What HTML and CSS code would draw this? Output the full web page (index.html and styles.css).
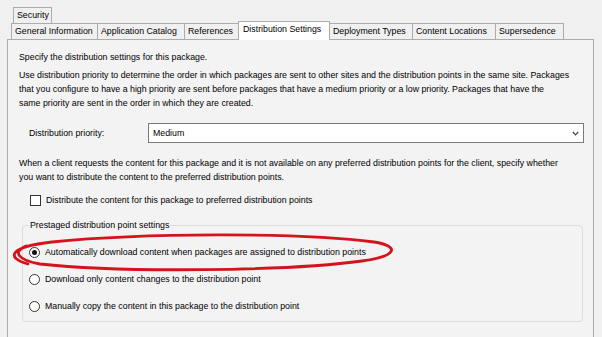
FILE: index.html
```html
<!DOCTYPE html>
<html lang="en">
<head>
  <meta charset="UTF-8">
  <title>Distribution Settings</title>
  <link rel="stylesheet" href="styles.css">
</head>
<body>

  <div class="window">
    <div class="tabs">
      <div class="tab-row top-row">
        <span class="tab tab-security">Security</span>
      </div>
      <div class="tab-row">
        <span class="tab tab-general">General Information</span>
        <span class="tab tab-catalog">Application Catalog</span>
        <span class="tab tab-references">References</span>
        <span class="tab tab-distribution active">Distribution Settings</span>
        <span class="tab tab-deployment">Deployment Types</span>
        <span class="tab tab-content">Content Locations</span>
        <span class="tab tab-supersedence">Supersedence</span>
      </div>
    </div>

    <div class="panel">
      <p class="intro">Specify the distribution settings for this package.</p>
      <p class="desc">Use distribution priority to determine the order in which packages are sent to other sites and the distribution points in the same site. Packages<br>that you configure to have a high priority are sent before packages that have a medium priority or a low priority. Packages that have the<br>same priority are sent in the order in which they are created.</p>

      <div class="priority-row">
        <span class="priority-label">Distribution priority:</span>
        <div class="select">
          <span>Medium</span>
          <svg class="chevron" width="7" height="5" viewBox="0 0 7 5">
            <path d="M0.8 1 L3.5 3.8 L6.2 1" fill="none" stroke="#444" stroke-width="1.2"/>
          </svg>
        </div>
      </div>

      <p class="desc client">When a client requests the content for this package and it is not available on any preferred distribution points for the client, specify whether<br>you want to distribute the content to the preferred distribution points.</p>

      <div class="check-row">
        <span class="checkbox"></span>
        <span>Distribute the content for this package to preferred distribution points</span>
      </div>

      <fieldset class="prestaged">
        <legend>Prestaged distribution point settings</legend>
        <div class="radio-row">
          <span class="radio checked"></span>
          <span>Automatically download content when packages are assigned to distribution points</span>
        </div>
        <div class="radio-row">
          <span class="radio"></span>
          <span>Download only content changes to the distribution point</span>
        </div>
        <div class="radio-row">
          <span class="radio"></span>
          <span>Manually copy the content in this package to the distribution point</span>
        </div>
      </fieldset>
    </div>

    <!-- red marker drawn over the first option -->
    <svg class="marker" width="602" height="337" viewBox="0 0 602 337">
      <path d="M28 264 C6 258 8 247 52 242 C140 233 300 232 374 242 C400 246 398 256 362 261 C290 271 120 273 40 264 C18 260 12 252 26 246"
            fill="none" stroke="#d3141d" stroke-width="2.8" stroke-linecap="round"/>
    </svg>
  </div>

</body>
</html>
```

FILE: styles.css
```css
* {
  margin: 0;
  padding: 0;
  box-sizing: border-box;
}

body {
  font-family: 'Liberation Sans', Arial, sans-serif;
  font-size: 8.8px;
  color: #000;
  background: #f0f0f0;
  width: 602px;
  height: 337px;
  overflow: hidden;
}

.window {
  position: relative;
  height: 337px;
}

.tabs {
  padding-top: 7px;
}

.tab-row {
  display: flex;
  align-items: flex-end;
  padding-left: 11px;
  height: 16px;
}

.tab-row.top-row {
  padding-left: 13px;
}

.tab {
  height: 16px;
  line-height: 15px;
  padding: 0 0 0 3px;
  border: 1px solid #acacac;
  border-bottom: none;
  background: #f0f0f0;
  white-space: nowrap;
  overflow: hidden;
}

.tab + .tab {
  margin-left: -1px;
}

.tab-security { width: 39px; }
.tab-general { width: 87px; }
.tab-catalog { width: 88px; }
.tab-references { width: 55px; }
.tab-distribution { width: 92px; }
.tab-deployment { width: 84px; }
.tab-content { width: 84px; }
.tab-supersedence { width: 69px; }

.tab.active {
  position: relative;
  z-index: 2;
  height: 19px;
  padding: 0 0 3px 4px;
  margin-bottom: -1px;
  background: #fff;
}

.panel {
  margin-left: 7px;
  width: 587px;
  height: 300px;
  border: 1px solid #acacac;
  background: #f3f3f3;
  padding: 10px 8px 0 11px;
  line-height: 14px;
}

.desc {
  margin-top: 4px;
  white-space: nowrap;
}

.priority-row {
  display: flex;
  align-items: center;
  margin-top: 13px;
  padding-left: 10px;
}

.priority-label {
  width: 119px;
  flex-shrink: 0;
}

.select {
  display: flex;
  align-items: center;
  justify-content: space-between;
  flex-shrink: 0;
  width: 436px;
  height: 20px;
  padding: 0 4px 0 4px;
  background: #fff;
  border: 1px solid #7a7a7a;
}

.client {
  margin-top: 13px;
}

.check-row {
  display: flex;
  align-items: center;
  gap: 5px;
  margin-top: 9px;
  padding-left: 11px;
}

.checkbox {
  width: 11px;
  height: 11px;
  border: 1px solid #333;
  background: #fff;
}

.prestaged {
  margin: 11px 0 0 3px;
  width: 561px;
  border: 1px solid #dcdcdc;
  border-radius: 4px;
  padding: 0 0 8px 6px;
}

.prestaged legend {
  padding: 0 1px;
  line-height: 14px;
}

.radio-row {
  display: flex;
  align-items: center;
  gap: 5px;
  height: 14px;
  margin-top: 13px;
}

.radio {
  width: 11px;
  height: 11px;
  border: 1px solid #333;
  border-radius: 50%;
  background: #fff;
  display: flex;
  align-items: center;
  justify-content: center;
}

.radio.checked::after {
  content: "";
  width: 5px;
  height: 5px;
  border-radius: 50%;
  background: #111;
}

.marker {
  position: absolute;
  left: 0;
  top: 0;
  pointer-events: none;
}
```
